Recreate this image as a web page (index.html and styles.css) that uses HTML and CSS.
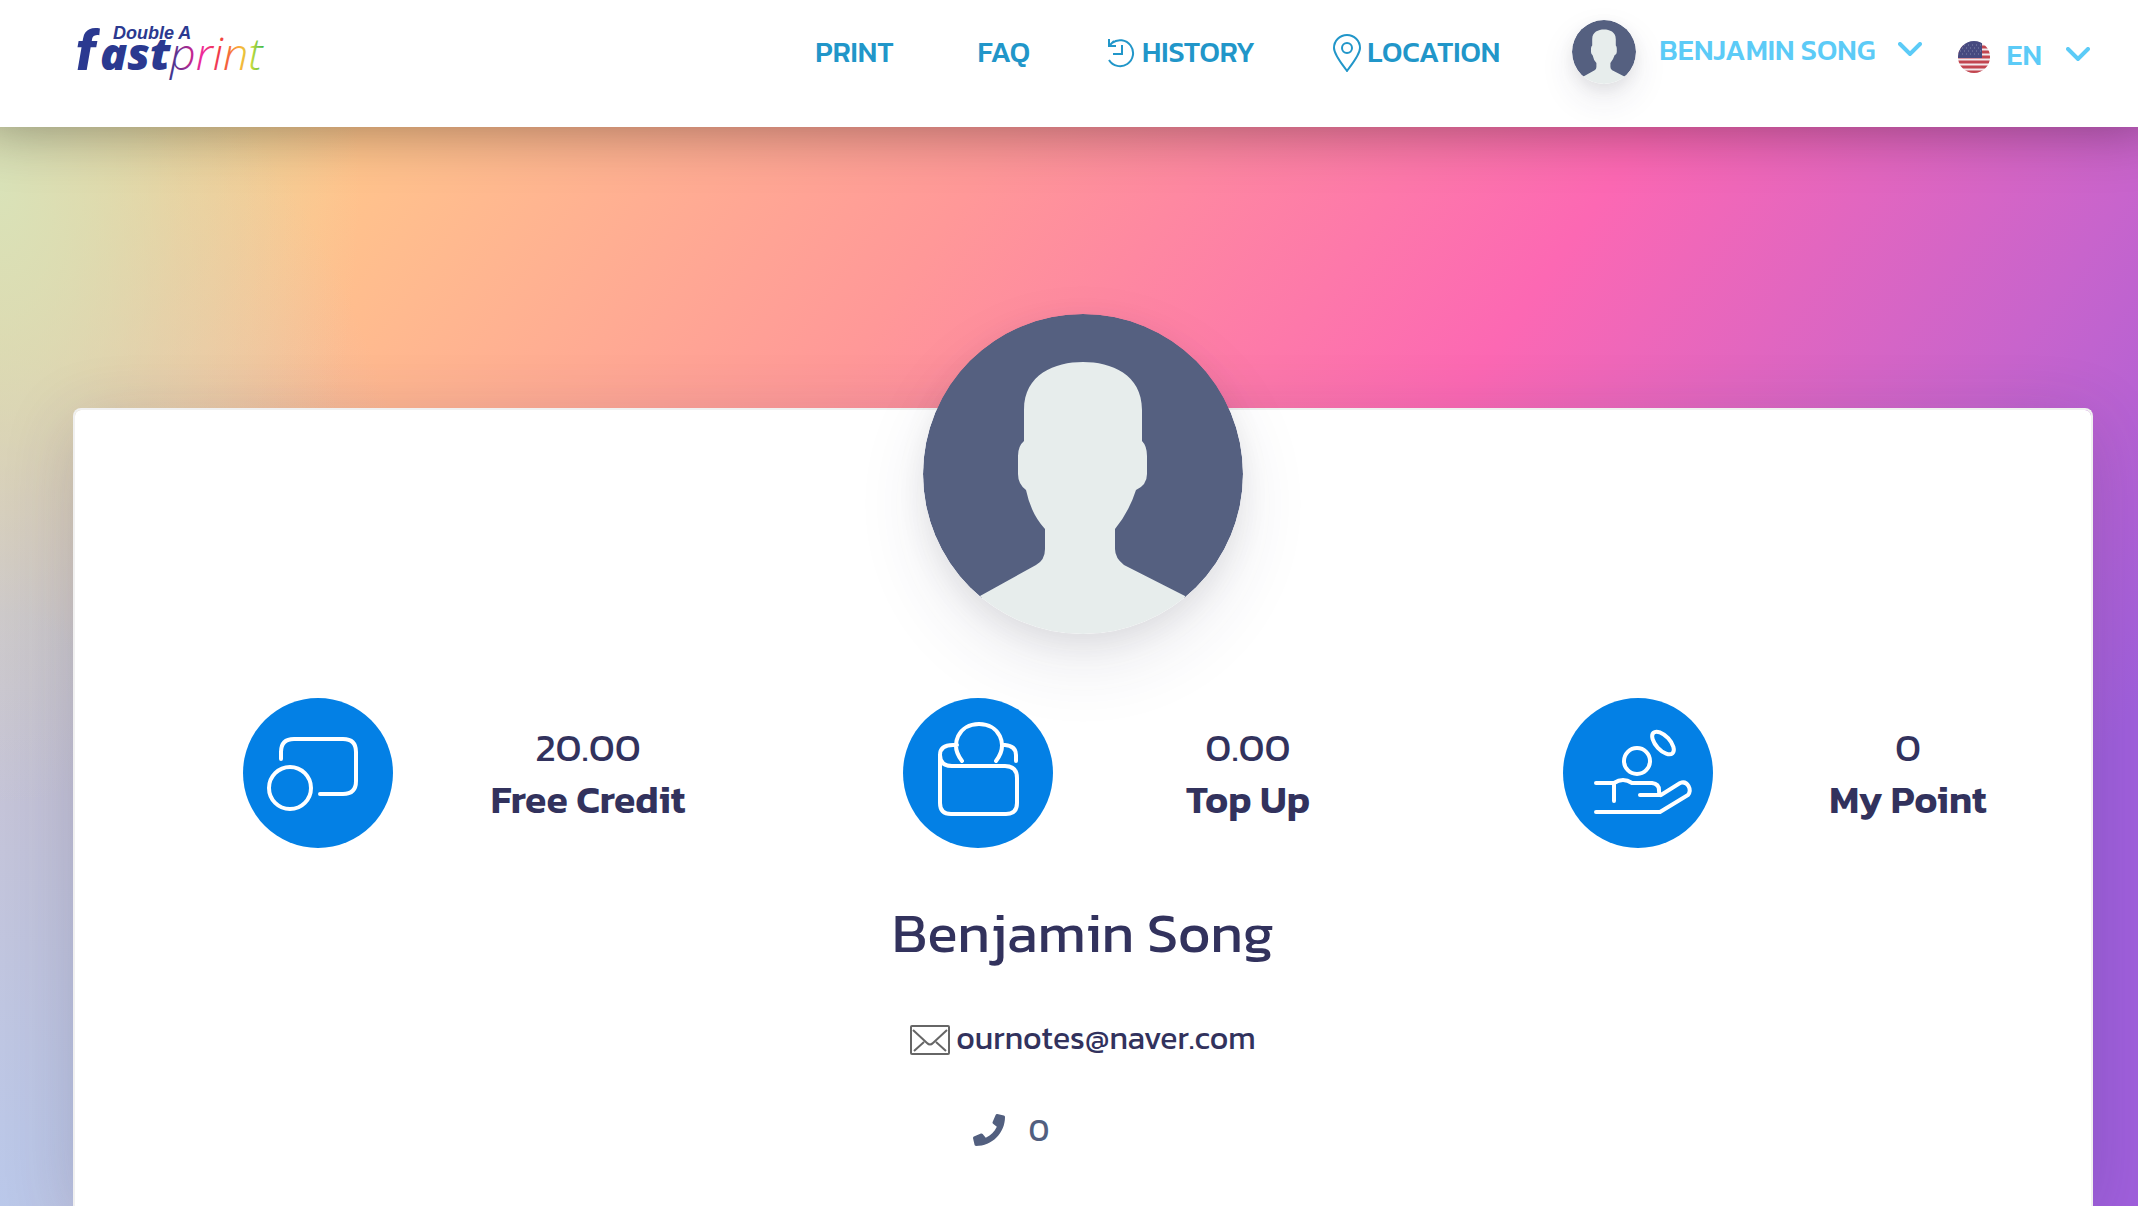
FILE: index.html
```html
<!DOCTYPE html>
<html lang="en">
<head>
    <meta charset="UTF-8">
    <meta name="viewport" content="width=device-width, initial-scale=1.0">
    <title>Double A Fastprint</title>
    <link rel="stylesheet" href="styles.css">
</head>
<body>
    <svg class="sprite" aria-hidden="true">
        <clipPath id="avatar-clip"><circle cx="160" cy="160" r="160"/></clipPath>
        <symbol id="avatar" viewBox="0 0 320 320">
            <g clip-path="url(#avatar-clip)">
                <path fill="#556080" d="M0 0H320V284H0z"/>
                <path fill="#e7edec" d="M160 48C132 48 101 60 101 96V127Q95 132 95 142V160Q95 170 103 176Q108 200 122 215V235Q122 246 113 251L57 282V320H262V282L201 251Q192 244 192 235V215Q206 198 213 176Q224 171 224 160V142Q224 132 219 127V96C219 60 188 48 160 48Z"/>
            </g>
        </symbol>
    </svg>

    <header class="navbar">
        <a href="#" class="logo" aria-label="Double A fastprint">
            <svg width="220" height="90" viewBox="0 0 220 90">
                <defs>
                    <linearGradient id="rainbow" gradientUnits="userSpaceOnUse" x1="108" y1="0" x2="204" y2="0">
                        <stop offset="0" stop-color="#2b3990"/>
                        <stop offset="0.25" stop-color="#c02690"/>
                        <stop offset="0.35" stop-color="#ee2a9b"/>
                        <stop offset="0.55" stop-color="#f03e3e"/>
                        <stop offset="0.75" stop-color="#fbb03b"/>
                        <stop offset="0.86" stop-color="#d0dc3c"/>
                        <stop offset="1" stop-color="#3ab848"/>
                    </linearGradient>
                </defs>
                <text x="53" y="27" class="logo-top">Double A</text>
                <text x="16" y="58" class="logo-f">f</text>
                <text x="40" y="58" class="logo-ast">ast</text>
                <text x="110" y="58" class="logo-print" fill="url(#rainbow)">print</text>
            </svg>
        </a>
        <nav class="menu">
            <a href="#">PRINT</a>
            <a href="#">FAQ</a>
            <a href="#">
                <svg class="icon-history" viewBox="0 0 28 30" fill="none" stroke="currentColor" stroke-width="2">
                    <path d="M1 22A13 13 0 1 0 4 5M1 1V8H8M1 8L6 3M14 7V16H5"/>
                </svg>
                HISTORY
            </a>
            <a href="#">
                <svg class="icon-pin" viewBox="0 0 28 38" fill="none" stroke="currentColor" stroke-width="2">
                    <path d="M14 37C12 34 1 21 1 14A13 13 0 0 1 27 14C27 21 16 34 14 37Z"/>
                    <circle cx="14" cy="14" r="5"/>
                </svg>
                LOCATION
            </a>
        </nav>
        <button type="button" class="drop user">
            <svg class="avatar-small"><use href="#avatar"/></svg>
            BENJAMIN SONG
            <svg class="chevron" viewBox="0 0 24 14"><path d="M2 2L12 12L22 2"/></svg>
        </button>
        <button type="button" class="drop lang">
            <svg class="flag" viewBox="0 0 32 32">
                <clipPath id="round"><circle cx="16" cy="16" r="16"/></clipPath>
                <g clip-path="url(#round)">
                    <path fill="#f3e9ec" d="M0 0H32V32H0z"/>
                    <path stroke="#c2454f" stroke-width="3" d="M0 6H32M0 11H32M0 16H32M0 21H32M0 26H32M0 31H32"/>
                    <path fill="#474a80" d="M0 0H24V17H0z"/>
                    <path stroke="#8587ab" stroke-dasharray="1 3" d="M2 4H23M4 7H23M2 10H23M4 13H23"/>
                </g>
            </svg>
            EN
            <svg class="chevron" viewBox="0 0 24 14"><path d="M2 2L12 12L22 2"/></svg>
        </button>
    </header>

    <main class="page">
        <section class="profile-card">
            <svg class="avatar" role="img" aria-label="Profile picture"><use href="#avatar"/></svg>

            <div class="stats">
                <div class="stat">
                    <svg class="stat-icon" viewBox="0 0 150 150">
                        <path d="M38 61V54Q38 41 51 41H100Q113 41 113 54V83Q113 96 100 96H77"/>
                        <circle cx="47" cy="90" r="21"/>
                    </svg>
                    <div class="stat-text">
                        <p>20.00</p>
                        <h2>Free Credit</h2>
                    </div>
                </div>
                <div class="stat">
                    <svg class="stat-icon" viewBox="0 0 150 150">
                        <path d="M37 57V105Q37 116 48 116H103Q114 116 114 105V80Q114 68 102 68H49Q37 68 37 57Q37 47 50 47H54M59 63C46 46 56 26 76 26S106 46 93 63M99 47H102Q113 48 113 57V63"/>
                    </svg>
                    <div class="stat-text">
                        <p>0.00</p>
                        <h2>Top Up</h2>
                    </div>
                </div>
                <div class="stat">
                    <svg class="stat-icon" viewBox="0 0 150 150">
                        <circle cx="74" cy="63" r="13"/>
                        <ellipse cx="100" cy="45" rx="7" ry="14" transform="rotate(-43 100 45)"/>
                        <path d="M33 85H51V103M51 85Q60 79 69 85H89Q96 86 96 92T98 97M77 97H98L117 85C125 82 129 92 125 97L97 114H33"/>
                    </svg>
                    <div class="stat-text">
                        <p>0</p>
                        <h2>My Point</h2>
                    </div>
                </div>
            </div>

            <h1 class="name">Benjamin Song</h1>
            <p class="email">
                <svg class="icon-mail" viewBox="0 0 40 30" fill="none" stroke="#666" stroke-width="2">
                    <rect x="1" y="1" width="38" height="28" rx="1"/>
                    <path d="M3 5L17 18Q20 21 23 18L37 5M14 17L4 26M26 17L36 26"/>
                </svg>
                ournotes@naver.com
            </p>
            <p class="phone">
                <svg class="icon-phone" viewBox="0 0 512 512" fill="currentColor">
                    <path d="M493.400 24.600l-104-24c-11.300-2.600-22.900 3.300-27.500 13.900l-48 112c-4.200 9.800-1.400 21.300 6.900 28l60.600 49.600c-36 76.700-98.900 140.500-177.200 177.200l-49.600-60.600c-6.800-8.300-18.200-11.100-28-6.900l-112 48C3.900 366.500-2 378.100.6 389.400l24 104C27.100 504.200 36.700 512 48 512c256.100 0 464-207.500 464-464 0-11.200-7.700-20.900-18.600-23.400z"/>
                </svg>
                <span>0</span>
            </p>
        </section>
    </main>
</body>
</html>
```
FILE: styles.css
```css
* {
    box-sizing: border-box;
}
body {
    margin: 0;
    min-height: 100vh;
    overflow-x: hidden;
    font-family: Kanit, "Noto Sans", sans-serif;
    color: #32325d;
    display: flex;
    flex-direction: column;
}
h1, h2, p {
    margin: 0;
}
.sprite {
    position: absolute;
    width: 0;
    height: 0;
}

/* navbar */
.navbar {
    position: relative;
    z-index: 1;
    height: 127px;
    padding: 12px 48px 0 60px;
    background: #fff;
    box-shadow: 0 -20px 60px 20px rgba(0,0,0,0.4);
    display: flex;
    align-items: flex-start;
}
.logo {
    margin-right: auto;
}
.logo svg {
    display: block;
}
.logo-top {
    font-family: "Liberation Sans", sans-serif;
    font-style: italic;
    font-size: 18px;
    font-weight: 700;
    fill: #2b3990;
}
.logo-f {
    font-family: Roboto, sans-serif;
    font-style: italic;
    font-size: 56px;
    font-weight: 900;
    fill: #2b3990;
}
.logo-ast {
    font-family: "Noto Sans", sans-serif;
    font-style: italic;
    font-size: 45px;
    font-weight: 900;
    fill: #2b3990;
}
.logo-print {
    font-family: "Open Sans", sans-serif;
    font-style: italic;
    font-size: 45px;
    font-weight: 300;
}
.menu {
    display: flex;
    gap: 78px;
    height: 78px;
}
.menu a {
    display: flex;
    align-items: center;
    gap: 6px;
    color: #2196c9;
    font-size: 29px;
    font-weight: 500;
    text-decoration: none;
}
.menu a:first-child {
    margin-right: 6px;
}
.menu svg {
    margin-top: 4px;
}
.icon-history {
    width: 28px;
    height: 30px;
}
.icon-pin {
    width: 28px;
    height: 38px;
}
.drop {
    display: flex;
    align-items: center;
    padding: 0;
    border: none;
    background: none;
    color: #5ccbf7;
    font-family: inherit;
    font-size: 29px;
    font-weight: 500;
    white-space: nowrap;
    cursor: pointer;
}
.user {
    gap: 23px;
    height: 74px;
    margin-left: 72px;
}
.lang {
    gap: 16px;
    height: 84px;
    margin-left: 36px;
}
.lang .chevron {
    margin-left: 8px;
}
.avatar-small {
    width: 64px;
    height: 64px;
    margin-top: 6px;
    border-radius: 50%;
    box-shadow: 0 15px 35px rgba(50,50,93,0.1), 0 5px 15px rgba(0,0,0,0.07);
}
.chevron {
    width: 24px;
    height: 14px;
    fill: none;
    stroke: currentColor;
    stroke-width: 4;
    stroke-linecap: round;
}
.flag {
    width: 32px;
    height: 32px;
    margin-top: 6px;
}

/* profile */
.page {
    flex: 1;
    display: flex;
    padding: 281px 45px 0 73px;
    background:
        radial-gradient(ellipse 360px 620px at 0 60px, #d9e2b8, rgba(217,226,184,0.4) 50%, rgba(217,226,184,0)),
        radial-gradient(ellipse 400px 600px at 0 100%, #bac8ea, rgba(186,200,234,0)),
        radial-gradient(ellipse 460px 900px at 0 70%, #c9c1cf 30%, rgba(203,193,207,0.4) 60%, rgba(203,193,207,0)),
        linear-gradient(125deg, #f3d08c 5%, #ffc48c 13%, #ff9898 35%, #fc68b3 57%, #c864cc 75%, #a05fdc 88%);
}
.profile-card {
    flex: 1;
    padding: 0 18px;
    background: #fff;
    background-clip: padding-box;
    border: 2px solid #f0f0f0;
    border-bottom: none;
    border-radius: 8px 8px 0 0;
    box-shadow: 0 15px 70px rgba(50,50,93,0.2);
    display: flex;
    flex-direction: column;
    align-items: center;
}
.avatar {
    width: 320px;
    height: 320px;
    flex-shrink: 0;
    margin-top: -96px;
    border-radius: 50%;
    box-shadow: 0 30px 70px rgba(50,50,93,0.1), 0 10px 30px rgba(0,0,0,0.07);
}
.stats {
    align-self: stretch;
    display: grid;
    grid-template-columns: repeat(3, 1fr);
    margin-top: 64px;
}
.stat {
    display: grid;
    grid-template-columns: 1fr 1fr;
}
.stat-icon {
    width: 150px;
    height: 150px;
    justify-self: end;
    margin-right: 30px;
    border-radius: 50%;
    background: #0380e5;
    fill: none;
    stroke: #fff;
    stroke-width: 4;
    stroke-linecap: round;
}
.stat-text {
    padding-top: 23px;
    text-align: center;
    line-height: 52px;
}
.stat-text p {
    font-size: 40px;
}
.stat-text h2 {
    font-size: 39px;
    font-weight: 600;
}
.name {
    margin-top: 48px;
    font-size: 56px;
    line-height: 72px;
    font-weight: 400;
}
.email {
    display: flex;
    align-items: center;
    gap: 6px;
    margin-top: 50px;
    font-size: 32px;
    line-height: 40px;
}
.icon-mail {
    width: 40px;
    height: 30px;
    margin-top: 4px;
}
.phone {
    display: flex;
    align-items: center;
    gap: 24px;
    margin-top: 52px;
    padding-right: 144px;
    padding-bottom: 40px;
    color: #525f7f;
    font-size: 32px;
    line-height: 40px;
}
.icon-phone {
    width: 32px;
    height: 32px;
}
```
